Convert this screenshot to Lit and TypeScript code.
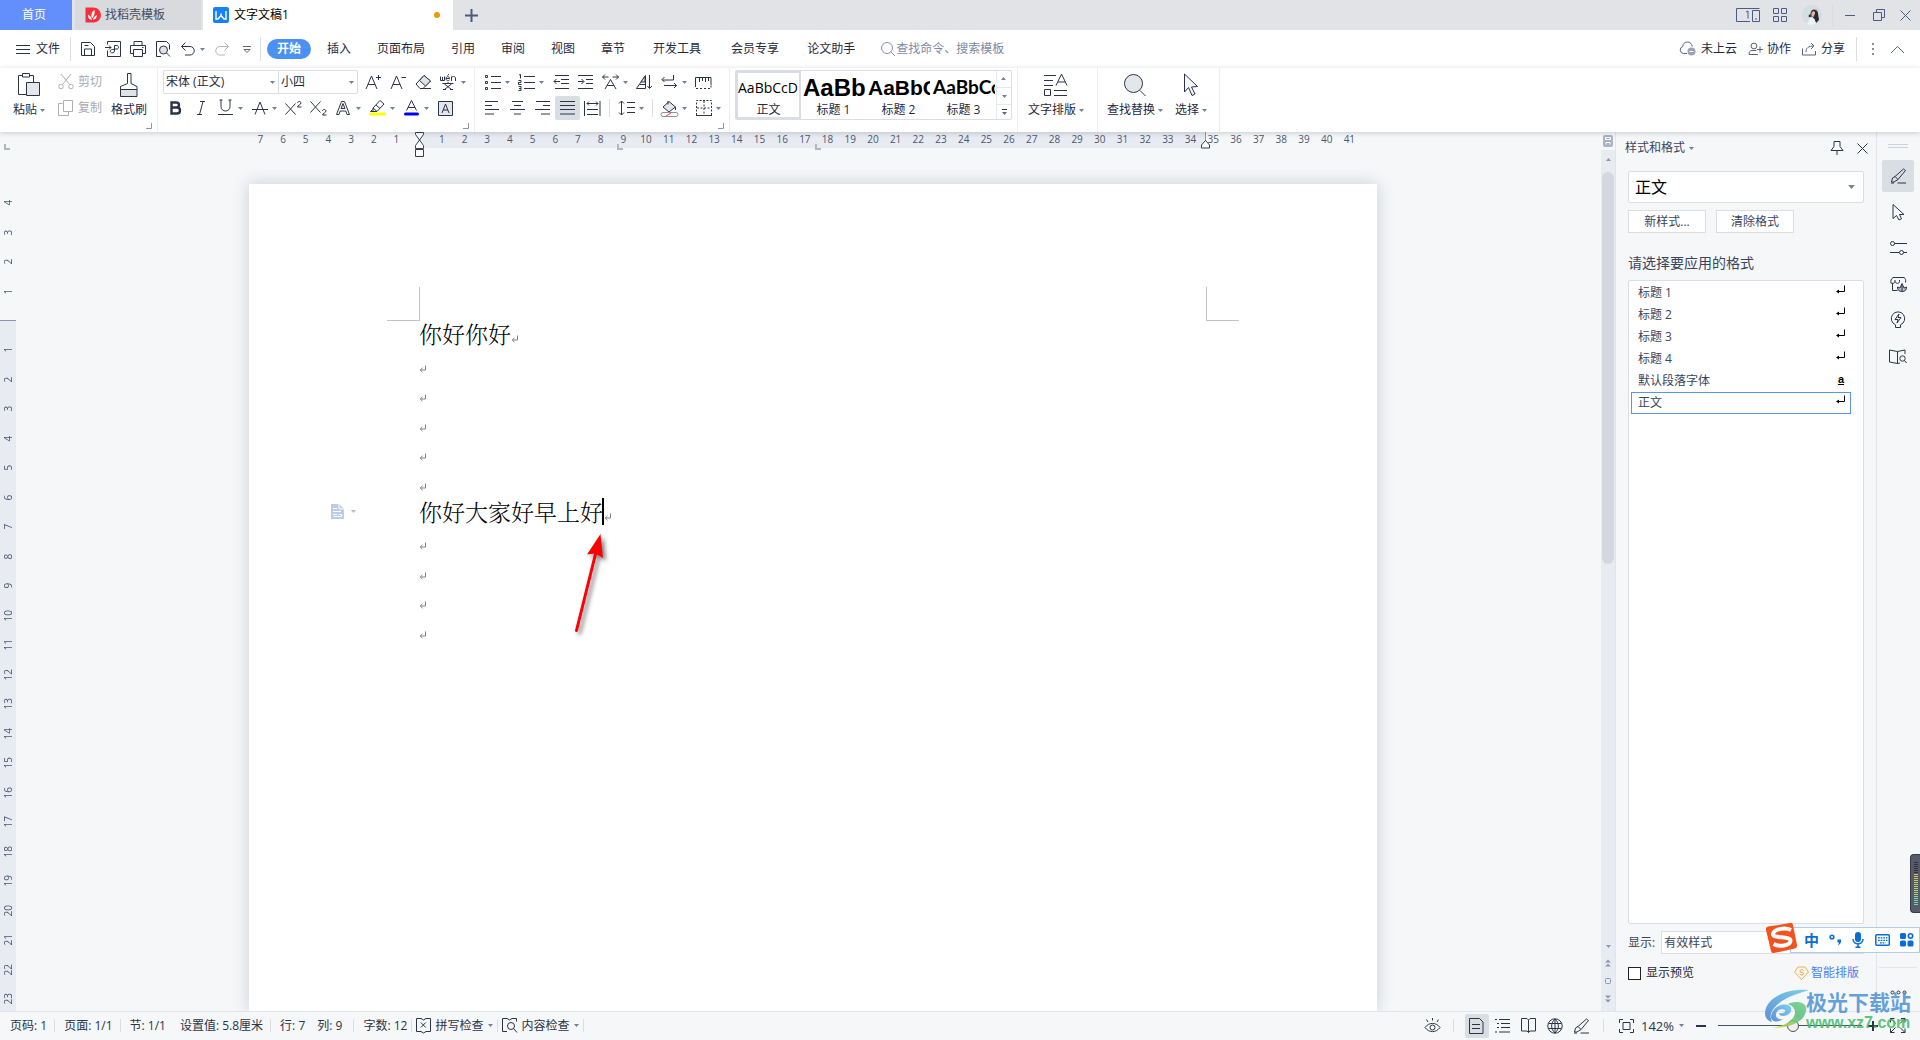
import { LitElement, html, svg, css, SVGTemplateResult, TemplateResult } from "lit";
import { customElement } from "lit/decorators.js";

const icon = (w: number, h: number, body: SVGTemplateResult): TemplateResult =>
  html`<svg class="ic" width=${w} height=${h} viewBox="0 0 ${w} ${h}" aria-hidden="true">${body}</svg>`;

const caret = html`<svg class="caret" width="5" height="3" viewBox="0 0 5 3" aria-hidden="true"><path d="M0 0h5L2.500 3z" /></svg>`;

const returnMark = html`<svg class="mark" width="8" height="8" viewBox="0 0 8 8" aria-hidden="true">
  <path d="M6.500 0.500v4.500H1.500M3.500 2.800L1.200 5l2.300 2.200" /></svg>`;

const styleReturn = icon(11, 9, svg`<path d="M9.500 .5v6H2" stroke="#000"/><path d="M4 4.500v4L1 6.500z" fill="#000" stroke="none"/>`);

const I = {
  burger: icon(14, 11, svg`<path d="M0 1.500h14M0 5.500h14M0 9.500h14"/>`),
  save: icon(16, 16, svg`<path d="M1.500 14.500v-13h9l4 4v9h-13zM4.500 14v-6h7v6M4.500 4.500h4"/>`),
  pdf: icon(16, 16, svg`<path d="M2.500 3.500V.500h13v15h-13V9.500M0 6.500h6M4 4.500l2 2-2 2M9.500 10V4.500h2.500c2 0 2 3.500 0 3.500h-2.500M9.500 8.500c-3.500-.5-5 1-4 2.500s4 1 4-1"/>`),
  print: icon(16, 16, svg`<path d="M4 4.500v-4h8v4M3.500 12.500h-3v-8h15v8h-3M3.500 8.500h9v7h-9z"/><path d="M12 6.500h1.500"/>`),
  preview: icon(16, 16, svg`<path d="M6 15.500H1.500v-15h10l3 3v5"/><circle cx="8.500" cy="9" r="4" fill="#dfe2e7"/><path d="M11.500 12l3.500 3.500"/>`),
  undo: icon(16, 16, svg`<path d="M5.500 1.500l-4 4 4 4M1.500 5.500H10a4.200 4.200 0 0 1 0 8.500H5"/>`),
  redo: icon(16, 16, svg`<path d="M10.500 1.500l4 4-4 4M14.500 5.500H6a4.200 4.200 0 0 0 0 8.500h5" stroke="#b0b4bb"/>`),
  more: icon(10, 9, svg`<path d="M1 1.500h8M2 4.500h6L5 7.500z" stroke="#5b6577"/>`),
  find: icon(16, 16, svg`<circle cx="7" cy="7" r="5.500"/><path d="M11 11l4 4"/>`),
  cloud: icon(18, 16, svg`<path d="M8 12.500H4.500a3.600 3.600 0 0 1-.8-7C4 2.500 6 1 8.500 1s4.500 1.800 4.700 4.500"/><circle cx="12.500" cy="10.500" r="4" fill="#9aa3b6" stroke="none"/><path d="M10.500 10.500h4" stroke="#fff"/>`),
  person: icon(15, 14, svg`<circle cx="6" cy="4" r="2.900"/><path d="M8.500 8.500H4c-2 0-3 1.500-3 4h9M12 4.500v6M9 7.500h6"/>`),
  share: icon(15, 14, svg`<path d="M.500 6.500v6.500h13V9M4 10c0-4 2.500-6 7.500-6M9 1l3 3-3 3"/>`),
  dots: icon(4, 14, svg`<path d="M1 1h2v2H1zM1 6h2v2H1zM1 11h2v2H1z" fill="#868d9a" stroke="none"/>`),
  up: icon(15, 9, svg`<path d="M1 8l6.500-6.500L14 8"/>`),
  paste: icon(22, 24, svg`<path d="M8 21.500H.500v-19h4M15.500 9V2.500h-4"/><path d="M4.500.500h7v3.500h-7z"/><path d="M8.500 9.500h13v13h-13z" fill="#e3e6ea"/>`),
  cut: icon(16, 16, svg`<g stroke="#adb1b7"><circle cx="3" cy="12.500" r="2.300"/><circle cx="13" cy="12.500" r="2.300"/><path d="M3 0l8.500 10.500M13 0L4.500 10.500"/></g>`),
  copy: icon(16, 16, svg`<g stroke="#adb1b7"><path d="M4.500 3.500h-4v12h10v-3.500"/><path d="M5.500.500h9v11h-9z"/></g>`),
  brush: icon(18, 24, svg`<path d="M7.500 10.500V.500h3.500v10l6 3v3H.500v-3z"/><path d="M.500 16.500h16.500v7H.500z" fill="#dfe2e7"/>`),
  aPlus: icon(17, 16, svg`<path d="M1 15L6.500 2l5.500 13M3 10.500h7M11 3.500h5M13.500 1v5"/>`),
  aMinus: icon(17, 16, svg`<path d="M1 15L6.500 2l5.500 13M3 10.500h7M11.500 3.500h4.500"/>`),
  eraser: icon(17, 16, svg`<path d="M1 10l8-8.500 6.500 5.500L8 14.500H5z"/><path d="M4.500 6.500L9 1.500l6.500 5.500-5 5z" fill="#dfe2e7"/><path d="M7 14.500h9"/>`),
  wen: icon(17, 16, svg`<path d="M.500 2.500v4h4v-4M2.500 3v3M6 4.500h3.500c0-2.600-3.500-2.600-3.500 0 0 2.500 2.500 2.500 3.500 1.500M7.500 1.500L9 .200M11.500 7V2.500M11.500 4c0-2 4-2 4 0v3M2.500 9.500h11M8 8v1.500M4.500 10l7 5.500M11.500 10l-7 5.500M3 15.500h3M10 15.500h3"/>`),
  bold: icon(13, 14, svg`<path d="M2.500 1.500h4.500c4 0 4 5 0 5H2.500zM2.500 6.500H8c4 0 4 6 0 6H2.500z" stroke-width="2.400"/>`),
  italic: icon(10, 14, svg`<path d="M4 .500h5M1 13.500h5M7 .500L3.500 13.500"/>`),
  underline: icon(15, 16, svg`<path d="M3 0v6.500c0 6 9 6 9 0V0M1.500 0h3M10.500 0h3M0 14.500h15"/>`),
  strike: icon(16, 15, svg`<path d="M3 13.500L8 1l5 12.500M0 8.500h16"/>`),
  sup: icon(17, 14, svg`<path d="M.500 2.500l10 11M10.500 2.500l-10 11M12.500 2c0-2 3.500-2 3.500 0 0 1.500-3.500 2.500-3.500 4H16.500"/>`),
  sub: icon(17, 15, svg`<path d="M.500 .500l10 11M10.500 .500l-10 11M12.500 10c0-2 3.500-2 3.500 0 0 1.500-3.500 2.500-3.500 4H16.500"/>`),
  outline: icon(15, 14, svg`<path d="M.500 13.500L5.500.500h3l5 13h-2.500l-1.200-3.500H4.200L3 13.500z"/><path d="M5 7.500L7 2.500l2 5z" fill="#dfe2e7"/>`),
  marker: icon(17, 16, svg`<path d="M4 8l7-7.500 4 3.500-7 7.500zM4 8v3.500H8M4 11.500H1.500l2-2M7 5l4 3.500"/><path d="M1.500 14h14" stroke="#ff0" stroke-width="3" stroke-linecap="round"/>`),
  color: icon(15, 16, svg`<path d="M2.500 10.500L7.500.500l5 10M4 7.500h7"/><path d="M1.500 14h12" stroke="#0000f5" stroke-width="3" stroke-linecap="round"/>`),
  boxed: icon(15, 15, svg`<path d="M.500.500h14v14H.500z" fill="#e3e6ea"/><path d="M4 12l3.500-9L11 12M5 9h5"/>`),
  bullets: icon(16, 16, svg`<path d="M6 2.500h10M6 8.500h10M6 14.500h10"/><path d="M.500 1.500h2v2h-2zM.500 7.500h2v2h-2zM.500 13.500h2v2h-2z"/>`),
  numbers: icon(17, 17, svg`<path d="M6 2.500h11M6 8.500h11M6 14.500h11M1 1l1.500-.5V4.500M.500 6.500h2.500v2H.500v2H3.500M.500 12.500h2.500v4H.500M1 14.500h2"/>`),
  dedent: icon(16, 16, svg`<path d="M2 1.500h14M8 5.500h8M8 9.500h8M2 14.500h14M1 7.500h6M3.500 5L1 7.500 3.500 10"/>`),
  indent: icon(16, 16, svg`<path d="M0 1.500h15M8 5.500h7M8 9.500h7M0 14.500h15M0 7.500h5.500M3.500 5L6 7.500 3.500 10"/>`),
  spread: icon(17, 16, svg`<path d="M3 15L8.500 5.500 14 15M5 11.500h7M.500 3h6M10.500 3h6M3 .500L.500 3 3 5.500M14 .500L16.500 3 14 5.500"/>`),
  sort: icon(17, 16, svg`<path d="M.500 14.500L9.500 1.500v13zM3.500 10.500h6M13.500 1v13M11.500 12l2 2.500 2.500-2.500"/><path d="M5 8l4-6v6z" fill="#e3e6ea"/>`),
  wrap: icon(17, 16, svg`<path d="M12.500 1v5H1M3.500 3L1 5.500 3.500 8M3 11.500h12.500M13 9l2.500 2.500L13 14"/>`),
  ruler: icon(17, 13, svg`<path d="M.500 9V1.500h15.500V9M4.500 2v4M7.500 2v3M10.500 2v4M13.500 2v3"/><path d="M.500 9v3.500h15.500V9" stroke-dasharray="2 2"/>`),
  left: icon(15, 14, svg`<path d="M0 .500h13M0 4.500h7M0 8.500h14M0 13h9"/>`),
  center: icon(15, 14, svg`<path d="M2 .500h11M4 4.500h7M0 8.500h15M4 13h7"/>`),
  right: icon(15, 14, svg`<path d="M1 .500h14M8 4.500h7M0 8.500h15M6 13h9"/>`),
  justify: icon(15, 14, svg`<path d="M0 .500h15M0 4.500h15M0 8.500h15M0 13h15"/>`),
  distribute: icon(17, 15, svg`<path d="M.500 0v15M16 0v15M3 2.500h11M5 .500L3 2.500l2 2M12 .500l2 2-2 2M3 8.500h11M3 13.500h11"/>`),
  line: icon(17, 16, svg`<path d="M3.500 1v14M1 3.500L3.500 1 6 3.500M1 12.500L3.500 15 6 12.500M9 2.500h8M9 7.500h8M9 12.500h8"/>`),
  fill: icon(17, 17, svg`<path d="M2 7l6-5.500L14.500 7 8 12z" fill="#e3e6ea"/><path d="M7 1v3.500M14.500 7v3"/><path d="M2 12.500h13a2 2 0 0 1 0 4H2a2 2 0 0 1 0-4z" stroke="#8c919b" fill="#fff"/><path d="M5 16l5-3" stroke="#f04848"/>`),
  borders: icon(16, 16, svg`<path d="M.500 15V.500h15V15M8 1v14M1 8h14" stroke-dasharray="2 1.500"/><path d="M0 15.500h16"/>`),
  layout: icon(24, 24, svg`<path d="M0 2.500h12M0 7.500h9M0 12.500h9M12 12.500L17.500 1l5.500 11.500M14 9h7M.500 16.500h6v6h-6zM10 17.500h13M10 22.500h13"/>`),
  search: icon(24, 24, svg`<circle cx="10.500" cy="10.500" r="9" fill="#e3e6ea"/><path d="M17 17.500l5.500 5.500"/>`),
  pointer: icon(16, 24, svg`<path d="M1.500 1v18l4-4.500 3.500 8 3-1.500L8.500 14l6-.5z" fill="#f5f6f8"/>`),
  tail: icon(6, 6, svg`<path d="M5.500 0v5.500H0" stroke="#8b97b0"/>`),
  device: icon(24, 14, svg`<path d="M14 13.500H.500V.500h23M10 4l2-1v7.500M16.500 2.500h7v11h-7zM19 11h2" stroke="#4b5b83"/>`),
  apps: icon(14, 14, svg`<path d="M.500.500h5v5h-5zM8.500.500h5v5h-5zM.500 8.500h5v5h-5zM8.500 8.500h5v5h-5z" stroke="#4b5b83"/>`),
  min: icon(10, 10, svg`<path d="M0 5.500h10" stroke="#4b5b83"/>`),
  restore: icon(12, 12, svg`<path d="M3.500 3.500v-3h8v8h-3M.500 3.500h8v8h-8z" stroke="#4b5b83"/>`),
  close: icon(11, 11, svg`<path d="M.500.500l10 10M10.500.500l-10 10"/>`),
  pin: icon(14, 14, svg`<path d="M4 .500h6v5l3 4H1l3-4zM7 9.500V14"/>`),
  pen: icon(16, 16, svg`<path d="M13.500 1l2 1.500-7.500 9-4 2.500-2.500 0 1-4 2.500-1.500zM5 8.500l3 3M7.500 15h8.500M1 15h3"/>`),
  cursor: icon(16, 18, svg`<path d="M3 1.500v14l3.500-3 2.500 4.500 2.500-1.200-2-4.300h4.500z"/>`),
  sliders: icon(17, 16, svg`<circle cx="2.500" cy="3.500" r="2"/><path d="M4.500 3.500H17M0 12.500h9"/><circle cx="11.500" cy="12.500" r="2"/><path d="M13.500 12.500H17"/>`),
  store: icon(17, 17, svg`<path d="M2.500 7.500v7h5M3 1.500h11c1.500 1 2 2.500 1.500 5M3 1.500C1 3 .500 5 1 7c1 1 3.500.5 4-1.500V4M5 5.500C6 8 9 8 9.500 5.500V4"/><path d="M12 15.500c-3 0-4.500-1.500-4.500-4.500l2.500 1 2-4.500 2 4.500 2.500-1c0 3-1.500 4.500-4.500 4.500zM12 9v6" fill="#b9bfca"/>`),
  bolt: icon(16, 18, svg`<path d="M5.500 13.800a6.700 6.700 0 1 1 5 0v2.700h-5zM9 3L5 8.500h3L7 12l4-5.500H8z"/>`),
  read: icon(18, 15, svg`<path d="M8.500 2.500L.500 1v12l8 1.500V2.500l7.500-1.500V5M8.500 14.500l2.500-.5"/><circle cx="13.500" cy="9.500" r="2.700"/><path d="M15.500 11.500l2 2.500"/>`),
  tinyDots: icon(17, 5, svg`<circle cx="2.500" cy="2.500" r="1.500"/><circle cx="8.500" cy="2.500" r="1.500"/><circle cx="14.500" cy="2.500" r="1.500"/>`),
  spell: icon(16, 15, svg`<path d="M5 .500H.500v13H5M10 .500h4.500v13H10M5 .500l2.500 1.500L10 .500M5 13.500L7.500 15l2.500-1.500M4.800 4.500l5 5M9.800 4.500l-5 5"/>`),
  content: icon(16, 15, svg`<path d="M5 .500H.500v13H5M10 .500h4.500v3M5 .500l2.500 1.500L10 .500"/><circle cx="9" cy="8" r="3.500"/><path d="M11.500 10.500l3.500 4"/>`),
  eye: icon(17, 15, svg`<path d="M1 9.500c4-5.500 11-5.500 15 0-4 5.500-11 5.500-15 0zM8.500 0v2.500M2.500 1.500L4 4M14.500 1.500L13 4"/><circle cx="8.500" cy="9.500" r="2.500"/>`),
  page: icon(15, 16, svg`<path d="M.500.500h10l3.500 3.500v11.500H.500zM3 6.500h8M3 10.500h8"/>`),
  outlineView: icon(15, 14, svg`<path d="M0 .500h2M4 .500h11M2 4.500h2M6 4.500h9M2 8.500h2M6 8.500h9M0 13h2M4 13h11"/>`),
  book: icon(16, 15, svg`<path d="M7.500 2L6 .500H.500v12.500H6L7.500 14.500 9 13h5.500V.500H9L7.500 2v12.500"/>`),
  globe: icon(16, 16, svg`<circle cx="8" cy="8" r="7.200"/><path d="M8 1c-4.500 4-4.500 10 0 14 4.500-4 4.500-10 0-14zM8 1v14M1.500 5.500h13M1.500 10.500h13"/>`),
  fit: icon(15, 14, svg`<path d="M.500 4V.500H4M11 .500h3.500V4M14.500 10v3.500H11M4 13.500H.500V10M4 3.500h7v7H4z"/>`),
  full: icon(16, 15, svg`<path d="M.500 4.500v-4h4M.500.500l5 5M11 .500h4v4M15 .500l-5 5M15 10.500v4h-4M15 14.500l-5-5M4.500 14.500h-4v-4M.500 14.500l5-5"/>`),
};

type Tool = [label: string, glyph: TemplateResult, drop?: boolean, extra?: string];
const tool = ([label, glyph, drop, extra]: Tool) => html`
  <button class="tool ${drop ? "drop" : ""} ${extra ?? ""}" type="button" title=${label} aria-label=${label}>
    <span class="glyph">${glyph}</span>${drop ? caret : ""}
  </button>`;

const TABS = ["插入", "页面布局", "引用", "审阅", "视图", "章节", "开发工具", "会员专享", "论文助手"];
const WIDE = new Set(["开发工具", "会员专享"]);
const FORMATS = ["标题 1", "标题 2", "标题 3", "标题 4", "默认段落字体", "正文"];
const LINES = ["你好你好", "", "", "", "", "", "你好大家好早上好", "", "", "", ""];
const range = (a: number, b: number) => Array.from({ length: b - a + 1 }, (_, i) => a + i);

@customElement("app-root")
export class AppRoot extends LitElement {
  static styles = css`
    :host {
      display: flex; flex-direction: column; position: relative; height: 100vh; overflow: hidden;
      background: #f5f7f9; color: #1f2940; font: 12px/16px "Open Sans", "Noto Sans CJK SC", sans-serif;
      --ink: #2b3447; --rule: #e1e4e9;
    }
    * { box-sizing: border-box; }
    button, select, input { font: inherit; color: inherit; margin: 0; }
    button { border: 0; background: none; padding: 0; white-space: nowrap; }
    .ic { display: block; flex: none; fill: none; stroke: var(--ink); stroke-width: 1; overflow: visible; }
    .caret { display: block; flex: none; fill: #74809a; }
    .grow { flex: 1; }
    .vr { width: 1px; height: 24px; background: #dadde2; flex: none; }

    .titlebar { display: flex; height: 30px; background: #e1e3e7; flex: none; }
    .tab { display: flex; align-items: center; gap: 5px; height: 30px; }
    .home { width: 72px; justify-content: center; padding-right: 4px; background: #638ffc; color: #fff; }
    .docer { width: 126px; margin-left: 3px; padding-left: 10px; background: #d8dadd; color: #444c5c; }
    .doc { width: 250px; margin-left: 2px; padding: 0 13px 0 10px; background: #fff; color: #000; }
    .dirty { width: 6px; height: 6px; border-radius: 3px; background: #e69a06; }
    .new { width: 36px; display: grid; place-items: center; }
    .window { display: flex; align-items: center; }
    .window button { display: grid; place-items: center; width: 32px; height: 30px; }
    .window .vr { margin-left: 4px; }
    .window .w-min { width: 34px; }
    .window .w-restore { width: 24px; }
    .window .w-close { width: 29px; --ink: #4b5b83; }

    .menubar { display: flex; align-items: center; height: 38px; background: #fff; flex: none; padding-right: 15px; }
    .file { display: flex; align-items: center; gap: 6px; padding-left: 16px; width: 70px; height: 24px; }
    .quick { display: flex; padding: 0 1px 0 4px; }
    .tool { display: flex; align-items: center; width: 25px; height: 24px; flex: none; border-radius: 2px; }
    .tool.drop { width: 34px; }
    .tool.on { background: #d9dee5; }
    .glyph { width: 25px; display: grid; place-items: center; flex: none; }
    .start { width: 44px; height: 20px; border-radius: 10px; background: #4a90f5; color: #fff; font-weight: 700; margin: 0 3px 0 6px; }
    .menu { padding: 0 13px; height: 24px; }
    .menu.wide { padding: 0 15px; }
    .command { display: flex; align-items: center; margin-left: 12px; color: #7c89a6; --ink: #8793ad; }
    .command input { width: 130px; border: 0; padding: 0; background: none; outline: 0; }
    .command input::placeholder { color: #7c89a6; opacity: 1; }
    .account { display: flex; align-items: center; gap: 11px; --ink: #596379; }
    .account button { display: flex; align-items: center; gap: 4px; }
    .account .dots { margin: 0 4px 0 3px; }

    .ribbon { display: flex; height: 64px; background: #fff; flex: none; position: relative; z-index: 2; box-shadow: 0 1px 5px rgba(40, 50, 70, .22); }
    .group { display: flex; padding: 2px 5px 0; border-right: 1px solid #eceef1; position: relative; }
    .rows { display: flex; flex-direction: column; gap: 2px; }
    .row { display: flex; align-items: center; }
    .row .vr { margin: 0 4px; height: 18px; }
    .tail { position: absolute; right: 5px; bottom: 3px; }
    .big { display: flex; flex-direction: column; align-items: center; gap: 5px; padding-top: 3px; width: 48px; }
    .big .label { display: flex; align-items: center; gap: 3px; }
    .small { display: flex; align-items: center; gap: 4px; height: 24px; }
    .muted { color: #a7abb2; }
    .clip { width: 158px; padding-left: 5px; }
    .clip .rows { margin-left: 5px; }
    .clip .paint { width: 42px; margin-left: 6px; }
    .font { width: 317px; }
    .para { width: 255px; }
    .pick { position: relative; display: flex; align-items: center; height: 24px; border: 1px solid #dadde2; background: #fff; }
    .pick select { appearance: none; border: 0; background: none; outline: 0; width: 100%; height: 100%; padding: 0 12px 0 2px; }
    .pick .caret { position: absolute; right: 3px; }
    .family { width: 116px; border-radius: 2px 0 0 2px; }
    .size { width: 80px; margin: 0 3px 0 -1px; border-radius: 0 2px 2px 0; }
    .styles { width: 288px; padding-right: 0; }
    .gallery { display: flex; width: 277px; height: 50px; border: 1px solid #dadde2; border-radius: 2px; }
    .sample { width: 65px; height: 48px; padding: 0 1px; overflow: hidden; display: flex; flex-direction: column; }
    .sample.on { box-shadow: inset 0 0 0 2px #dadde4; }
    .preview { height: 31px; line-height: 34px; text-align: left; color: #000; overflow: hidden; width: 63px; padding-left: 1px; font-size: 14px; }
    .h1 { font: 700 24px/34px "Liberation Sans", Arial, sans-serif; }
    .h2 { font: 700 21px/34px "Liberation Sans", Arial, sans-serif; }
    .h3 { font: 700 19px/32px Lato, sans-serif; }
    .caption { width: 100%; text-align: center; line-height: 16px; }
    .scrolls { margin-left: auto; width: 15px; border-left: 1px solid #e6e8ec; display: grid; grid-template-rows: 16px 17px 15px; }
    .scrolls button { display: grid; place-items: center; }
    .scrolls button + button { border-top: 1px solid #e6e8ec; }
    .flip { transform: rotate(180deg); }
    .typeset { width: 80px; padding-left: 9px; }
    .lookup { width: 122px; padding: 2px 8px 0; }
    .typeset .big, .lookup .big { width: 58px; }
    .lookup .choose { width: 32px; margin-left: 11px; }

    .workspace { flex: 1; min-height: 0; display: flex; }
    .vruler { width: 16px; overflow: hidden; flex: none; color: #4c5870; font-size: 10px; }
    .before { height: 188px; padding-bottom: 14px; display: flex; flex-direction: column; justify-content: flex-end; }
    .after { border-top: 1px solid #8a97b1; background: #e8ebf1; padding-top: 14px; }
    .ticks { display: flex; flex-direction: column; }
    .before .ticks { height: 118px; }
    .after .ticks { height: 679px; }
    .ticks span { flex: 1; display: grid; place-items: center; writing-mode: vertical-rl; transform: rotate(180deg); line-height: 12px; }
    .corner { position: absolute; left: 4px; top: 144px; width: 6px; height: 6px; border: solid #b1b6c3; border-width: 0 0 2px 2px; }

    .canvas { flex: 1; min-width: 0; overflow: hidden; padding-left: 9px; display: flex; flex-direction: column; align-items: center; }
    .hruler { position: relative; width: 1128px; height: 16px; flex: none; margin-bottom: 36px; padding-right: 16px; color: #4c5870; font-size: 10px; }
    .band { position: absolute; left: 170px; right: 171px; top: 0; height: 16px; background: #e8ebf1; border-right: 1px solid #8a97b1; }
    .scale { position: relative; display: flex; height: 16px; }
    .scale span { flex: 1; text-align: center; line-height: 15px; }
    .marks { position: absolute; left: 166px; top: 0; }
    .marks-right { position: absolute; right: 167px; top: 8px; }
    .stop { position: absolute; top: 12px; width: 6px; height: 6px; border: solid #b1b6c3; border-width: 0 0 2px 2px; }
    .stop.a { left: 368px; } .stop.b { left: 566px; }
    .paper { position: relative; width: 1128px; flex: 1; background: #fff; box-shadow: 0 0 16px rgba(50, 60, 80, .22); padding: 135px 171px 0 170px; }
    .crop { position: absolute; top: 103px; width: 33px; height: 34px; border: solid #c3c3c3; }
    .crop.l { left: 138px; border-width: 0 1px 1px 0; }
    .crop.r { right: 138px; border-width: 0 0 1px 1px; }
    .text { display: flex; flex-direction: column; height: 325px; font: 300 23px/29px "Noto Serif CJK SC", "Noto Sans CJK SC Light", "Noto Sans CJK SC", serif; color: #000; }
    .text p { flex: 1; margin: 0; display: flex; align-items: center; }
    .mark { fill: none; stroke: #808080; stroke-width: 1; margin-top: 11px; }
    .beam { width: 2px; height: 27px; background: #000; margin-left: -1px; }
    .tag { position: absolute; left: 82px; top: 320px; display: flex; align-items: center; gap: 7px; }
    .tag .caret { fill: #b5b9c2; }
    .pointing { position: absolute; left: 320px; top: 344px; }

    .scrollbar { width: 14px; flex: none; display: flex; flex-direction: column; align-items: center; --ink: #8c98b0; }
    .scrollbar .view { height: 18px; display: grid; place-items: center; }
    .track { flex: 1; width: 14px; background: #e8ebf1; display: flex; flex-direction: column; align-items: center; gap: 11px; padding: 8px 1px; }
    .track .caret { fill: #8c98b0; }
    .thumb { width: 12px; height: 392px; border-radius: 6px; background: #d4d7e0; }

    .panel { width: 262px; flex: none; border-left: 1px solid var(--rule); border-right: 1px solid var(--rule); padding: 0 12px; display: flex; flex-direction: column; color: #3a455c; }
    .head { display: flex; align-items: center; gap: 4px; height: 32px; margin: 0 -5px 0 -3px; }
    .head .close { margin-left: 7px; }
    .head button { width: 14px; display: grid; place-items: center; }
    .current { height: 32px; margin-top: 7px; font-size: 16px; color: #000; border-radius: 2px; flex: none; }
    .current select { padding-left: 6px; }
    .current .caret { right: 8px; width: 7px; height: 4px; }
    .actions { display: flex; gap: 10px; margin-top: 7px; }
    .actions button { width: 78px; height: 23px; border: 1px solid #dadde2; background: #fff; }
    .ask { font-size: 14px; line-height: 20px; margin: 20px 0 7px; font-weight: 400; }
    .list { flex: 1; border: 1px solid #dadfe6; border-radius: 2px; background: #fff; margin: 0; padding: 1px 12px 0 2px; list-style: none; }
    .list button { width: 100%; height: 22px; display: flex; align-items: center; justify-content: space-between; padding: 0 4px 0 6px; border: 1px solid transparent; }
    .list .ic { margin-top: -7px; }
    .list .chosen { border-color: #5b93e6; }
    .char { color: #000; font: 700 11px/12px "Liberation Sans", sans-serif; text-decoration: underline; margin: -4px 2px 0 0; }
    .show { display: flex; align-items: center; gap: 6px; height: 23px; margin-top: 7px; }
    .show .pick { flex: 1; height: 23px; }
    .foot { display: flex; align-items: center; justify-content: space-between; height: 16px; margin: 11px 5px 30px 0; }
    .foot label { display: flex; align-items: center; gap: 5px; color: #1f2940; }
    .foot input { appearance: none; width: 13px; height: 13px; border: 1px solid #222; background: #fff; }
    .smart { display: flex; align-items: center; gap: 2px; color: #4c7ff2; text-decoration: none; }

    .rail { width: 43px; flex: none; display: flex; flex-direction: column; align-items: center; padding: 0 1px 16px 0; }
    .grip { width: 20px; height: 4px; border: solid #ced2d9; border-width: 1px 0; margin: 12px 0; }
    .rail button { width: 32px; height: 32px; margin-bottom: 4px; display: grid; place-items: center; border-radius: 2px; }
    .rail .on { background: #d9dee5; }
    .rail .hr { width: 38px; height: 1px; background: var(--rule); margin: auto 0 22px; }

    .status { height: 29px; flex: none; display: flex; align-items: center; border-top: 1px solid var(--rule); padding: 0 14px 1px 10px; color: #2b3447; }
    .status .vr { height: 13px; margin: 0 9px 0 7px; }
    .status .far { margin-left: 11px; }
    .status .tight { margin: 0 4px; }
    .status .after-eye { margin: 0 11px 0 12px; }
    .status .after-views { margin: 0 15px 0 10px; }
    .status button { display: flex; align-items: center; gap: 3px; height: 24px; }
    .status button .caret { margin-left: 2px; }
    .gap-s { margin-left: 12px; }
    .gap-m { margin-left: 14px; }
    .views { display: flex; gap: 2px; }
    .views button { width: 24px; justify-content: center; }
    .views .on { background: #d9dee5; border-radius: 2px; }
    .status .zoom { font-size: 13px; margin-left: 7px; }
    .status input { appearance: none; width: 144px; height: 14px; margin: 0 6px 0 12px; background: linear-gradient(#4a5368, #4a5368) center / 100% 1px no-repeat; }
    .status input::-webkit-slider-thumb { appearance: none; width: 12px; height: 12px; border-radius: 6px; border: 1px solid #50545c; background: #f0eeee; }

    .recorder { position: absolute; right: 0; bottom: 127px; width: 10px; height: 59px; border: 1px solid #363b45; border-right: 0; border-radius: 4px 0 0 4px; background: #555b69; padding: 7px 2px 6px 3px; }
    .meter { height: 100%; background: linear-gradient(#2f333b 0 24%, #e8b54a 26%, #b7d96e 60%, #58d6c8); mask: repeating-linear-gradient(#000 0 1px, transparent 1px 2px); }
    .ime { position: absolute; right: 0; bottom: 87px; width: 130px; height: 26px; background: #fff; border: 1px solid #b3cbea; display: flex; align-items: center; justify-content: space-between; padding: 0 5px 0 13px; color: #0a6cd6; font-size: 15px; font-weight: 700; }
    .sogou { position: absolute; left: -26px; top: -6px; }
    .brand { position: absolute; right: 9px; bottom: 7px; display: flex; pointer-events: none; }
    .brand div { font: 700 21px/24px "Noto Sans CJK SC", sans-serif; color: rgba(74, 145, 214, .85); margin-left: -4px; padding-top: 1px; }
    .brand span { display: block; font: 700 16px/20px "Liberation Sans", Arial, sans-serif; color: rgba(66, 186, 104, .85); }
  `;

  private titlebar() {
    return html`<header class="titlebar">
      <button class="tab home" type="button">首页</button>
      <button class="tab docer" type="button">
        ${icon(15, 16, svg`<path d="M.500.500h8a7.500 7.500 0 0 1 0 15h-8z" fill="#f5303c" stroke="none"/><path d="M7 13c-3-.5-4.500-2.500-4-5.500l3 2.500zM6.500 10C6 7 7 4.500 9.500 3c.5 3 0 5-2 8zM8 12.500c.5-2 2-4 4-4.500 0 2.500-1.500 4.500-4 4.500z" fill="#fff" stroke="none"/>`)}
        找稻壳模板
      </button>
      <button class="tab doc" type="button">
        ${icon(16, 16, svg`<rect width="16" height="16" rx="2" fill="#1781fb" stroke="none"/><path d="M3 4v8h2l3-3.500 3 3.500h2V4M8 9V6.500" stroke="#fff" stroke-width="1.400"/>`)}
        文字文稿1<span class="grow"></span><span class="dirty"></span>
      </button>
      <button class="new" type="button" aria-label="新建">${icon(13, 13, svg`<path d="M6.500 0v13M0 6.500h13" stroke="#4d5a7a" stroke-width="2"/>`)}</button>
      <span class="grow"></span>
      <div class="window">
        <button type="button" aria-label="布局">${I.device}</button>
        <button type="button" aria-label="应用">${I.apps}</button>
        <button type="button" aria-label="账号">
          ${icon(20, 20, svg`<g stroke="none"><circle cx="10" cy="10" r="10" fill="#d3dde4"/><path d="M8.500 9c0-3 2-5 4.500-4.500 3 .5 3 4 3.500 7l.5 3.500-3 3-2-4-1.500-2.500-3 .5z" fill="#2e2830"/><path d="M9.500 8c1-2.500 4-2.500 3.500.5L11.500 12l-2-1z" fill="#e2b9a8"/><path d="M5 19l3.500-6.500 4 1.500 1.500 4.500c-3 1.500-6 1.500-9 .5z" fill="#eef4f6"/><path d="M11.500 4.500l3.500-.5 1 2z" fill="#d9b273"/><path d="M7 9.500l2 .5-1 2.500-1.500-1z" fill="#3a3238"/></g>`)}
        </button>
        <span class="vr"></span>
        <button class="w-min" type="button" aria-label="最小化">${I.min}</button>
        <button class="w-restore" type="button" aria-label="还原">${I.restore}</button>
        <button class="w-close" type="button" aria-label="关闭">${I.close}</button>
      </div>
    </header>`;
  }

  private menubar() {
    const quick: Tool[] = [["保存", I.save], ["输出为PDF", I.pdf], ["打印", I.print], ["打印预览", I.preview], ["撤销", I.undo, true], ["恢复", I.redo], ["更多", I.more]];
    return html`<nav class="menubar">
      <button class="file" type="button">${I.burger}文件</button>
      <span class="vr"></span>
      <div class="quick">${quick.map(tool)}</div>
      <span class="vr"></span>
      <button class="start" type="button">开始</button>
      ${TABS.map((t) => html`<button class="menu ${WIDE.has(t) ? "wide" : ""}" type="button">${t}</button>`)}
      <label class="command">${I.find}<input type="search" placeholder="查找命令、搜索模板" aria-label="查找命令、搜索模板" /></label>
      <span class="grow"></span>
      <div class="account">
        <button type="button">${I.cloud}未上云</button>
        <button type="button">${I.person}协作</button>
        <button type="button">${I.share}分享</button>
        <span class="vr"></span>
        <button class="dots" type="button" aria-label="更多">${I.dots}</button>
        <button type="button" aria-label="收起功能区">${I.up}</button>
      </div>
    </nav>`;
  }

  private ribbon() {
    const font1: Tool[] = [["增大字号", I.aPlus], ["减小字号", I.aMinus], ["清除格式", I.eraser], ["拼音指南", I.wen, true]];
    const font2: Tool[] = [["加粗", I.bold], ["倾斜", I.italic], ["下划线", I.underline, true], ["删除线", I.strike, true], ["上标", I.sup], ["下标", I.sub], ["文字效果", I.outline, true], ["突出显示", I.marker, true], ["字体颜色", I.color, true], ["字符底纹", I.boxed]];
    const para1: Tool[] = [["项目符号", I.bullets, true], ["编号", I.numbers, true], ["减少缩进", I.dedent], ["增加缩进", I.indent], ["中文版式", I.spread, true], ["排序", I.sort], ["显示标记", I.wrap, true], ["制表位", I.ruler]];
    const para2: Tool[] = [["左对齐", I.left], ["居中", I.center], ["右对齐", I.right], ["两端对齐", I.justify, false, "on"], ["分散对齐", I.distribute]];
    const samples = [["正文", "AaBbCcD", ""], ["标题 1", "AaBb", "h1"], ["标题 2", "AaBbC", "h2"], ["标题 3", "AaBbCc", "h3"]];
    return html`<section class="ribbon">
      <div class="group clip">
        <button class="big" type="button">${I.paste}<span class="label">粘贴${caret}</span></button>
        <div class="rows muted">
          <button class="small" type="button">${I.cut}剪切</button>
          <button class="small" type="button">${I.copy}复制</button>
        </div>
        <button class="big paint" type="button">${I.brush}<span class="label">格式刷</span></button>
        <span class="tail">${I.tail}</span>
      </div>
      <div class="group font">
        <div class="rows">
          <div class="row">
            <span class="pick family"><select aria-label="字体"><option>宋体 (正文)</option></select>${caret}</span>
            <span class="pick size"><select aria-label="字号"><option>小四</option></select>${caret}</span>
            ${font1.map(tool)}
          </div>
          <div class="row">${font2.map(tool)}</div>
        </div>
        <span class="tail">${I.tail}</span>
      </div>
      <div class="group para">
        <div class="rows">
          <div class="row">${para1.map(tool)}</div>
          <div class="row">${para2.map(tool)}<span class="vr"></span>${tool(["行距", I.line, true])}<span class="vr"></span>${tool(["底纹颜色", I.fill, true])}${tool(["边框", I.borders, true])}</div>
        </div>
        <span class="tail">${I.tail}</span>
      </div>
      <div class="group styles">
        <div class="gallery">
          ${samples.map(([name, text, cls], i) => html`<button class="sample ${i ? "" : "on"}" type="button">
            <span class="preview ${cls}">${text}</span><span class="caption">${name}</span></button>`)}
          <div class="scrolls">
            <button class="flip" type="button" aria-label="上一行">${caret}</button>
            <button type="button" aria-label="下一行">${caret}</button>
            <button type="button" aria-label="更多样式">${icon(5, 6, svg`<path d="M0 .500h5"/><path d="M0 3h5L2.500 6z" fill="#5b6780" stroke="none"/>`)}</button>
          </div>
        </div>
      </div>
      <div class="group typeset"><button class="big" type="button">${I.layout}<span class="label">文字排版${caret}</span></button></div>
      <div class="group lookup">
        <button class="big" type="button">${I.search}<span class="label">查找替换${caret}</span></button>
        <button class="big choose" type="button">${I.pointer}<span class="label">选择${caret}</span></button>
      </div>
    </section>`;
  }

  private document() {
    return html`
      <div class="vruler">
        <div class="before"><div class="ticks">${[4, 3, 2, 1].map((n) => html`<span>${n}</span>`)}</div></div>
        <div class="after"><div class="ticks">${range(1, 23).map((n) => html`<span>${n}</span>`)}</div></div>
      </div>
      <span class="corner"></span>
      <main class="canvas">
        <div class="hruler">
          <div class="band"></div>
          <div class="scale">${range(-7, 41).map((n) => html`<span>${n === 0 ? "" : Math.abs(n)}</span>`)}</div>
          <svg class="marks" width="10" height="28" viewBox="0 0 10 28" fill="#fff" stroke="#333f5a"><path d="M.500 .500h8v2l-4 5.500-4-5.500zM4.500 8l4 5.500v3h-8v-3zM.500 17.500h8v7h-8z" /></svg>
          <svg class="marks-right" width="9" height="9" viewBox="0 0 9 9" fill="#fff" stroke="#333f5a"><path d="M4.500.500l4 4.500v3h-8v-3z" /></svg>
          <span class="stop a"></span><span class="stop b"></span>
        </div>
        <article class="paper">
          <span class="crop l"></span><span class="crop r"></span>
          <div class="text">
            ${LINES.map((t, i) => html`<p>${t}${i === 6 ? html`<span class="beam"></span>` : ""}${returnMark}</p>`)}
          </div>
          <span class="tag">
            ${icon(13, 15, svg`<path d="M0 0h8l5 5v10H0z" fill="#b9cdea" stroke="none"/><path d="M8 0v5h5M2 4.500h4M2 7.500h8M2 10.500h4M7.500 10.500h3v2h-8" stroke="#fff"/>`)}${caret}
          </span>
          <svg class="pointing" width="46" height="110" viewBox="0 0 46 110" aria-hidden="true">
            <g style="filter:drop-shadow(3px 3px 2px rgba(0,0,0,.5))"><path d="M7.500 102.500L27 24" stroke="#f00" stroke-width="3" stroke-linecap="round" /><path d="M31.500 6l2.500 24-7.500-4.500-8.500 1z" fill="#f00" /></g>
          </svg>
        </article>
      </main>
      <div class="scrollbar">
        <span class="view">${icon(10, 12, svg`<rect x=".500" y=".500" width="9" height="11" rx="1" fill="#aab4c8" stroke="#aab4c8"/><path d="M2.500 2.500h5v2h-5zM3 9.500v-2h4v2" stroke="#fff"/>`)}</span>
        <div class="track">
          <span class="flip">${caret}</span><span class="thumb"></span><span class="grow"></span>
          ${caret}
          ${icon(6, 8, svg`<path d="M0 3.500L3 .500l3 3zM0 7.500L3 4.500l3 3z" fill="#8c98b0" stroke="none"/>`)}
          ${icon(6, 6, svg`<rect x=".500" y=".500" width="5" height="5" rx="1"/>`)}
          ${icon(6, 8, svg`<path d="M0 .500L3 3.500l3-3zM0 4.500L3 7.500l3-3z" fill="#8c98b0" stroke="none"/>`)}
        </div>
      </div>`;
  }

  private panel() {
    const rail: [string, TemplateResult][] = [["样式", I.pen], ["选择", I.cursor], ["属性", I.sliders], ["素材", I.store], ["推荐", I.bolt], ["阅读", I.read]];
    return html`<aside class="panel">
        <div class="head">样式和格式${caret}<span class="grow"></span>
          <button type="button" aria-label="固定">${I.pin}</button>
          <button class="close" type="button" aria-label="关闭">${I.close}</button></div>
        <span class="pick current"><select aria-label="当前样式"><option>正文</option></select>${caret}</span>
        <div class="actions"><button type="button">新样式...</button><button type="button">清除格式</button></div>
        <h2 class="ask">请选择要应用的格式</h2>
        <ul class="list">
          ${FORMATS.map((f, i) => html`<li><button class=${i === 5 ? "chosen" : ""} type="button">${f}${i === 4 ? html`<span class="char">a</span>` : styleReturn}</button></li>`)}
        </ul>
        <div class="show"><label for="show">显示:</label><span class="pick"><select id="show"><option>有效样式</option></select></span></div>
        <div class="foot">
          <label><input type="checkbox" />显示预览</label>
          <a class="smart" href="#smart">${icon(15, 14, svg`<path d="M4 1h7l3.500 5-7 7.500L.500 6z" stroke="#efb04a"/><path d="M9.500 4.500c-1.500-1.500-4-.5-3.500 1s3.500.5 3.500 2-2.500 2-4 .5" stroke="#efa52c"/>`)}智能排版</a>
        </div>
      </aside>
      <div class="rail">
        <span class="grip"></span>
        ${rail.map(([l, g], i) => html`<button class=${i ? "" : "on"} type="button" aria-label=${l}>${g}</button>`)}
        <span class="hr"></span>${I.tinyDots}
      </div>`;
  }

  private status() {
    return html`<footer class="status">
      <span>页码: 1</span><span class="vr"></span><span>页面: 1/1</span><span class="vr"></span><span>节: 1/1</span>
      <span class="gap-m">设置值: 5.8厘米</span><span class="vr"></span><span>行: 7</span><span class="gap-s">列: 9</span><span class="vr far"></span>
      <span>字数: 12</span><span class="vr tight"></span>
      <button type="button">${I.spell}拼写检查${caret}</button><span class="vr tight"></span>
      <button type="button">${I.content}内容检查${caret}</button><span class="vr tight"></span>
      <span class="grow"></span>
      <button type="button" aria-label="护眼模式">${I.eye}</button><span class="vr after-eye"></span>
      <div class="views">
        <button class="on" type="button" aria-label="页面视图">${I.page}</button>
        <button type="button" aria-label="大纲">${I.outlineView}</button>
        <button type="button" aria-label="阅读版式">${I.book}</button>
        <button type="button" aria-label="Web版式">${I.globe}</button>
        <button type="button" aria-label="写作模式">${I.pen}</button>
      </div>
      <span class="vr after-views"></span>
      <button type="button" aria-label="最佳显示比例">${I.fit}</button>
      <button class="zoom" type="button">142%${caret}</button>
      <button class="gap-s" type="button" aria-label="缩小">${icon(10, 10, svg`<path d="M0 5h10" stroke-width="2"/>`)}</button>
      <input type="range" min="0" max="100" value="52" aria-label="显示比例" />
      <button type="button" aria-label="放大">${icon(10, 10, svg`<path d="M0 5h10M5 0v10" stroke-width="2"/>`)}</button>
      <button class="gap-s" type="button" aria-label="全屏显示">${I.full}</button>
    </footer>`;
  }

  private overlays() {
    return html`
      <div class="recorder"><div class="meter"></div></div>
      <div class="ime">
        <svg class="sogou" width="33" height="32" viewBox="0 0 33 32" aria-hidden="true"><path d="M3 4.500L25.500 1c1.500 0 2 .5 2.500 2l4 20c0 2-.5 3-2 3.500L9 31c-2 .3-2.500-.5-3-2L1 8c-.3-2 .3-3 2-3.500z" fill="#f4511e" /><path d="M26 8C20 5 9 7 8 12c-.5 5 17 1.500 17.500 6.500C25.500 24 14 25 8.500 22" fill="none" stroke="#fff" stroke-width="4" /></svg>
        <span>中</span>
        ${icon(13, 12, svg`<circle cx="3" cy="3" r="1.800" stroke="#0a6cd6" stroke-width="1.600"/><path d="M8.500 5.500h3.500c.5 3-.5 4.500-3 6l1-3H8.500z" fill="#0a6cd6" stroke="none"/>`)}
        ${icon(12, 16, svg`<rect x="3" width="6" height="10" rx="3" fill="#0a6cd6" stroke="none"/><path d="M1 7c0 6.500 10 6.500 10 0M6 12v3M3.500 15.200h5" stroke="#0a6cd6" stroke-width="1.500"/>`)}
        ${icon(15, 12, svg`<rect x=".800" y=".800" width="13.500" height="10.500" rx="1" stroke="#0a6cd6" stroke-width="1.500"/><path d="M3 3.800h9.500M3 6.300h9.500M5 8.900h5.500" stroke="#0a6cd6" stroke-width="1.300" stroke-dasharray="1.800 .800"/>`)}
        ${icon(14, 14, svg`<g fill="#0a6cd6" stroke="none"><rect width="6" height="6" rx="1.500"/><rect y="7.500" width="6" height="6" rx="1.500"/><rect x="7.500" y="7.500" width="6" height="6" rx="1.500"/></g><circle cx="10.500" cy="3" r="2.200" stroke="#0a6cd6" stroke-width="1.600"/>`)}
      </div>
      <div class="brand">
        <svg width="46" height="44" viewBox="0 0 46 44" aria-hidden="true">
          <defs><linearGradient id="sea" x1="0" y1="1" x2="1" y2="0"><stop offset="0" stop-color="#4a84cf" /><stop offset="1" stop-color="#6ccbf0" /></linearGradient>
          <linearGradient id="leaf" x1="0" y1="1" x2="1" y2="0"><stop offset="0" stop-color="#e4e33c" /><stop offset=".6" stop-color="#55c07a" /><stop offset="1" stop-color="#7ccf8d" /></linearGradient></defs>
          <g opacity=".88"><path d="M45 2C22 0 2 10 1 25c0 5 3 8 7 9-3-6-1-12 5-17C20 10 32 6 45 2z" fill="url(#sea)" />
          <path d="M7 29c1-9 9-14 17-12 5 2 4 8-1 10-4 2-8 1-8-2 4 1 7-1 6-3-3-2-9 0-9 5 0 3 3 5 7 4-5 4-12 3-12-2z" fill="url(#sea)" />
          <path d="M24 16c9-4 20-2 18 7-2 11-16 17-34 17 9-2 16-4 20-9 5-5 4-12-4-15z" fill="url(#leaf)" /></g>
        </svg>
        <div>极光下载站<span>www.xz7.com</span></div>
      </div>`;
  }

  render() {
    return html`${this.titlebar()}${this.menubar()}${this.ribbon()}
      <div class="workspace">${this.document()}${this.panel()}</div>
      ${this.status()}${this.overlays()}`;
  }
}
